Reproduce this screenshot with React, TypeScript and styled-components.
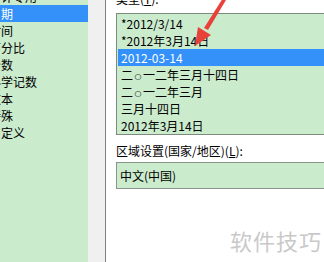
import React from 'react';
import styled, { createGlobalStyle } from 'styled-components';

const GlobalStyle = createGlobalStyle`
  html, body {
    margin: 0;
    padding: 0;
    background: #ffffff;
  }
  body {
    font-family: "Noto Sans CJK SC", "Liberation Sans", sans-serif;
    font-size: 12px;
    color: #000;
  }
`;

const Window = styled.div`
  position: relative;
  width: 324px;
  height: 262px;
  overflow: hidden;
  display: flex;
  background: #ffffff;
`;

const CategoryList = styled.div`
  width: 88px;
  flex: none;
  background: #cbebcd;
  overflow: hidden;
`;

const CategoryItems = styled.div`
  margin-top: -12px;
`;

const Category = styled.div<{ $selected?: boolean }>`
  height: 17px;
  line-height: 17px;
  white-space: nowrap;
  text-indent: -11px;
  background: ${(p) => (p.$selected ? '#3391f9' : 'transparent')};
  color: ${(p) => (p.$selected ? '#ffffff' : '#000000')};
`;

const ScrollTrack = styled.div`
  width: 17px;
  flex: none;
  background: #f0f0f0;
`;

const GroupEdge = styled.div`
  width: 1px;
  flex: none;
  background: #7f7f7f;
`;

const Panel = styled.div`
  flex: 1;
  display: flex;
  flex-direction: column;
  padding-left: 10px;
  min-width: 0;
`;

const Label = styled.div<{ $top?: number }>`
  height: 17px;
  line-height: 17px;
  margin-top: ${(p) => p.$top ?? 0}px;
  white-space: nowrap;
`;

const Key = styled.span`
  text-decoration: underline;
`;

const TypeList = styled.div`
  width: 240px;
  margin-top: 6px;
  border: 1px solid #7d8a80;
  background: #cbebcd;
  padding: 1px 0 0 1px;
`;

const TypeItem = styled.div<{ $selected?: boolean }>`
  height: 17px;
  line-height: 17px;
  padding-left: 3px;
  white-space: nowrap;
  background: ${(p) => (p.$selected ? '#3391f9' : 'transparent')};
  color: ${(p) => (p.$selected ? '#ffffff' : '#000000')};
`;

const Zero = styled.span`
  font-family: "DejaVu Sans", sans-serif;
  font-size: 8px;
  display: inline-block;
  width: 10px;
  text-align: center;
  vertical-align: 1px;
`;

const Combo = styled.div`
  width: 240px;
  height: 25px;
  line-height: 25px;
  margin-top: 3px;
  border: 1px solid #8a968c;
  background: #cbebcd;
  padding-left: 3px;
  white-space: nowrap;
`;

const Watermark = styled.div`
  position: absolute;
  left: 230px;
  top: 224px;
  font-size: 22px;
  letter-spacing: 1px;
  color: #c9c9c9;
  white-space: nowrap;
`;

const Arrow = styled.svg`
  position: absolute;
  left: 0;
  top: 0;
`;

const categories = ['会计专用', '日期', '时间', '百分比', '分数', '科学记数', '文本', '特殊', '自定义'];
const types = [
  '*2012/3/14',
  '*2012年3月14日',
  '2012-03-14',
  '二○一二年三月十四日',
  '二○一二年三月',
  '三月十四日',
  '2012年3月14日',
];

// the small ring in 二○一二 is drawn far smaller than the CJK font's own glyph
const renderType = (t: string) =>
  t.split('○').flatMap((part, i) => (i === 0 ? [part] : [<Zero key={i}>○</Zero>, part]));

export default function App() {
  return (
    <Window>
      <GlobalStyle />
      <CategoryList>
        <CategoryItems>
          {categories.map((c) => (
            <Category key={c} $selected={c === '日期'}>
              {c}
            </Category>
          ))}
        </CategoryItems>
      </CategoryList>
      <ScrollTrack />
      <GroupEdge />
      <Panel>
        <Label $top={-10}>
          类型(<Key>T</Key>):
        </Label>
        <TypeList>
          {types.map((t) => (
            <TypeItem key={t} $selected={t === '2012-03-14'}>
              {renderType(t)}
            </TypeItem>
          ))}
        </TypeList>
        <Label $top={7}>
          区域设置(国家/地区)(<Key>L</Key>):
        </Label>
        <Combo>中文(中国)</Combo>
      </Panel>
      <Arrow width="324" height="262" viewBox="0 0 324 262">
        <polygon points="223,-2 226,0 208,30 204,28" fill="#e8413a" />
        <polygon points="195,46 198,27 211,35" fill="#e8413a" />
      </Arrow>
      <Watermark>软件技巧</Watermark>
    </Window>
  );
}
